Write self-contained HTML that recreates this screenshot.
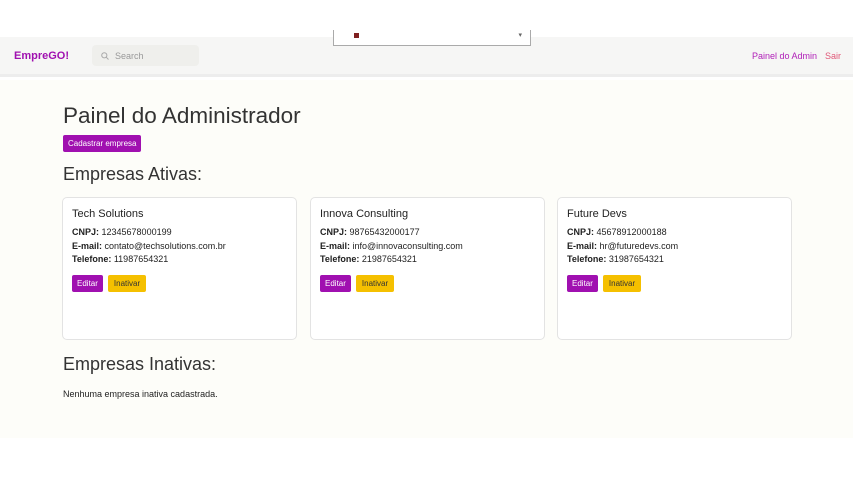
<!DOCTYPE html>
<html><head><meta charset="utf-8"><style>
*{box-sizing:border-box;margin:0;padding:0}
body{width:853px;height:480px;background:#fff;font-family:"Liberation Sans",sans-serif;position:relative;overflow:hidden;color:#222}
.nav{position:absolute;top:37px;left:0;width:853px;height:40px;background:#f6f6f5;border-bottom:3px solid #ededed}
.logo{position:absolute;left:14px;top:13px;font-weight:bold;font-size:11px;color:#a010b0}
.search{position:absolute;left:92px;top:8px;width:107px;height:21px;background:#efefec;border-radius:4px;font-size:9px;color:#999;padding:6px 0 0 23px}
.search svg{position:absolute;left:9px;top:7px}
.links{position:absolute;right:12px;top:14px;font-size:9px}
.links a{color:#b020b8;text-decoration:none}
.links a.s{color:#e05878;margin-left:8px}
.dd{position:absolute;left:333px;top:30px;width:198px;height:16px;background:#fff;border:1px solid #aaa;border-top:none;z-index:5}
.main{position:absolute;top:80px;left:0;width:853px;height:358px;background:#fdfdf9}
h1{position:absolute;left:63px;top:23px;font-size:22.5px;font-weight:normal;color:#333}
.btn{display:inline-block;font-size:8px;color:#fff;background:#a010b0;border-radius:2px;padding:4px 5px}
.cad{position:absolute;left:63px;top:55px}
h2{position:absolute;left:63px;font-size:18px;font-weight:normal;color:#333}
.card{position:absolute;top:117px;width:235px;height:143px;border:1px solid #e3e3e3;border-radius:5px;background:#fff;padding:10px 9px}
.card h3{font-size:11px;font-weight:normal;margin-bottom:6px;color:#222}
.card p{font-size:9px;line-height:13.5px;color:#222}
.card .b{margin-top:6px}
.y{background:#f5c000;color:#333;margin-left:5px;padding:4px 6px}
.none{position:absolute;left:63px;top:309px;font-size:9px}
</style></head><body>
<div class="dd"><span style="position:absolute;left:20px;top:3px;width:5px;height:5px;background:#802020"></span><span style="position:absolute;right:8px;top:1px;font-size:7px;color:#666">▾</span></div>
<div class="nav">
<div class="logo">EmpreGO!</div>
<div class="search"><svg width="8" height="8" viewBox="0 0 8 8"><circle cx="3.3" cy="3.3" r="2.6" fill="none" stroke="#aaa" stroke-width="1"/><path d="M5.2 5.2L7.5 7.5" stroke="#aaa"/></svg>Search</div>
<div class="links"><a>Painel do Admin</a><a class="s">Sair</a></div>
</div>
<div class="main">
<h1>Painel do Administrador</h1>
<div class="btn cad">Cadastrar empresa</div>
<h2 style="top:84px">Empresas Ativas:</h2>
<div class="card" style="left:62px"><h3>Tech Solutions</h3><p><b>CNPJ:</b> 12345678000199</p><p><b>E-mail:</b> contato@techsolutions.com.br</p><p><b>Telefone:</b> 11987654321</p><div class="b"><span class="btn">Editar</span><span class="btn y">Inativar</span></div></div>
<div class="card" style="left:310px"><h3>Innova Consulting</h3><p><b>CNPJ:</b> 98765432000177</p><p><b>E-mail:</b> info@innovaconsulting.com</p><p><b>Telefone:</b> 21987654321</p><div class="b"><span class="btn">Editar</span><span class="btn y">Inativar</span></div></div>
<div class="card" style="left:557px"><h3>Future Devs</h3><p><b>CNPJ:</b> 45678912000188</p><p><b>E-mail:</b> hr@futuredevs.com</p><p><b>Telefone:</b> 31987654321</p><div class="b"><span class="btn">Editar</span><span class="btn y">Inativar</span></div></div>
<h2 style="top:274px">Empresas Inativas:</h2>
<div class="none">Nenhuma empresa inativa cadastrada.</div>
</div>
</body></html>
